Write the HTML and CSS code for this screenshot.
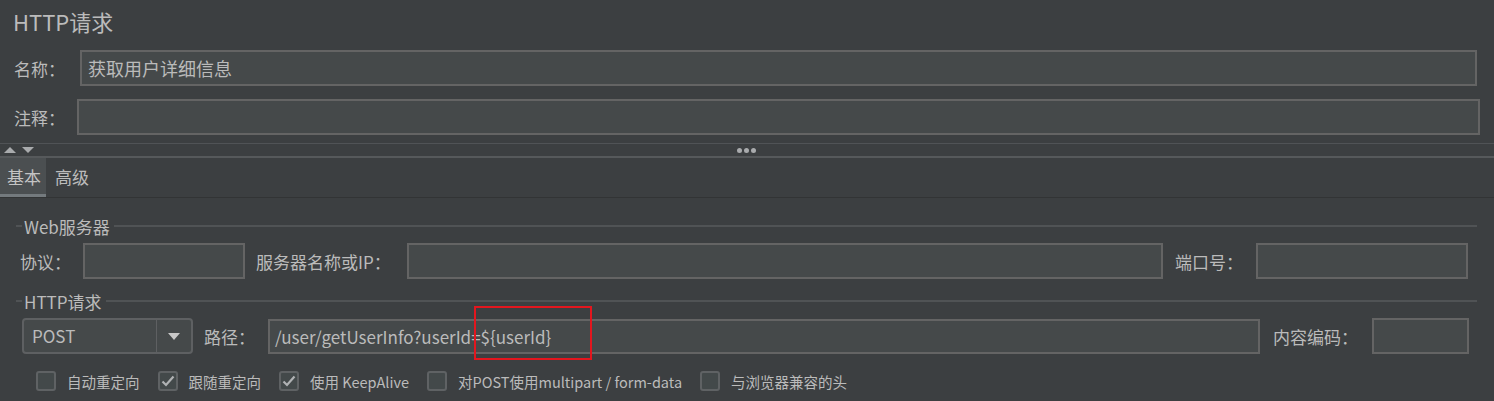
FILE: index.html
```html
<!DOCTYPE html>
<html lang="zh-CN">
<head>
<meta charset="utf-8">
<title>HTTP请求</title>
<link rel="stylesheet" href="styles.css">
</head>
<body>
<div class="page">
  <div class="title">HTTP请求</div>

  <div class="row row-name">
    <span class="lbl lbl-name">名称：</span>
    <div class="input">获取用户详细信息</div>
  </div>
  <div class="row row-comment">
    <span class="lbl lbl-comment">注释：</span>
    <div class="input"></div>
  </div>

  <div class="splitter">
    <div class="arrows">
      <svg width="12" height="8" viewBox="0 0 12 8"><polygon points="0,7 6,1 12,7" fill="#a9abad"/></svg>
      <svg width="12" height="8" viewBox="0 0 12 8"><polygon points="0,1 12,1 6,7" fill="#a9abad"/></svg>
    </div>
    <div class="dots"><span></span><span></span><span></span></div>
  </div>

  <div class="tabs">
    <div class="tab tab-active">基本</div>
    <div class="tab">高级</div>
  </div>

  <div class="panel">
    <div class="group-title"><span class="gl-left"></span><span class="gl-text">Web服务器</span><span class="gl-line"></span></div>
    <div class="frow frow-server">
      <span class="lbl w-proto">协议：</span>
      <div class="input in-proto"></div>
      <span class="lbl w-host">服务器名称或IP：</span>
      <div class="input in-flex"></div>
      <span class="lbl w-port">端口号：</span>
      <div class="input in-port"></div>
    </div>

    <div class="group-title"><span class="gl-left"></span><span class="gl-text">HTTP请求</span><span class="gl-line"></span></div>
    <div class="frow frow-http">
      <div class="combo">
        <span class="combo-text">POST</span>
        <span class="combo-btn"><svg width="12" height="7" viewBox="0 0 12 7"><polygon points="0,0 12,0 6,7" fill="#c8c8c8"/></svg></span>
      </div>
      <span class="lbl w-path">路径：</span>
      <div class="input in-flex in-path">/user/getUserInfo?userId=${userId}<span class="highlight"></span></div>
      <span class="lbl w-enc">内容编码：</span>
      <div class="input in-enc"></div>
    </div>

    <div class="checks">
      <label class="check"><span class="box"></span><span>自动重定向</span></label>
      <label class="check"><span class="box box-on"><svg width="14" height="12" viewBox="0 0 14 12"><path d="M1.5 6.5 L5 10 L12.5 1.5" fill="none" stroke="#b0b2b4" stroke-width="2.2"/></svg></span><span>跟随重定向</span></label>
      <label class="check"><span class="box box-on"><svg width="14" height="12" viewBox="0 0 14 12"><path d="M1.5 6.5 L5 10 L12.5 1.5" fill="none" stroke="#b0b2b4" stroke-width="2.2"/></svg></span><span>使用 KeepAlive</span></label>
      <label class="check"><span class="box"></span><span>对POST使用multipart / form-data</span></label>
      <label class="check"><span class="box"></span><span>与浏览器兼容的头</span></label>
    </div>
  </div>
</div>
</body>
</html>
```
FILE: styles.css
```css
* { box-sizing: border-box; }
html, body {
  margin: 0;
  padding: 0;
  background: #3c3f41;
}
body {
  width: 1494px;
  height: 401px;
  overflow: hidden;
  font-family: "Noto Sans CJK SC", "Noto Sans", sans-serif;
  color: #bbbbbb;
}
.page { display: flex; flex-direction: column; }

.title {
  height: 46px;
  line-height: 42px;
  padding-left: 13px;
  font-size: 22px;
  color: #bbbbbb;
}

.row {
  display: flex;
  align-items: center;
  height: 36px;
  padding-left: 14px;
}
.row-name { margin-top: 4px; padding-right: 17px; }
.row-comment { margin-top: 13px; padding-right: 14px; }
.lbl {
  font-size: 17px;
  white-space: nowrap;
  flex: none;
}
.lbl-name { width: 66px; }
.lbl-comment { width: 63px; }

.input {
  height: 36px;
  background: #45494a;
  border: 2px solid #646464;
  font-size: 18px;
  line-height: 32px;
  padding-left: 6px;
  color: #bbbbbb;
  white-space: nowrap;
  flex: 1;
  position: relative;
}

.splitter {
  margin-top: 8px;
  height: 15px;
  border-top: 1px solid #505356;
  border-bottom: 2px solid #56595b;
  position: relative;
  display: flex;
  align-items: center;
}
.arrows {
  display: flex;
  gap: 6px;
  padding-left: 4px;
  margin-top: -1px;
}
.dots {
  position: absolute;
  left: 737px;
  top: 4px;
  display: flex;
  gap: 2px;
}
.dots span {
  width: 5px;
  height: 5px;
  border-radius: 50%;
  background: #a9abad;
}

.tabs {
  display: flex;
  height: 40px;
  border-bottom: 1px solid #323435;
}
.tab {
  font-size: 17px;
  line-height: 38px;
  padding: 0 5px 0 9px;
}
.tab-active {
  background: #4b4f51;
  padding: 0 5px 0 7px;
  border-bottom: 3px solid #747a7e;
  color: #c4c4c4;
}

.panel {
  display: flex;
  flex-direction: column;
}
.group-title {
  display: flex;
  align-items: center;
  height: 20px;
  padding-left: 16px;
  padding-right: 17px;
}
.panel > .group-title:first-child { margin-top: 18px; }
.gl-left {
  width: 6px;
  height: 2px;
  background: #505355;
}
.gl-text {
  font-size: 17px;
  padding: 0 4px 0 2px;
  white-space: nowrap;
}
.gl-line {
  flex: 1;
  height: 2px;
  background: #505355;
}

.frow {
  display: flex;
  align-items: center;
  height: 36px;
}
.frow-server {
  margin-top: 7px;
  padding-left: 20px;
  padding-right: 26px;
  margin-bottom: 12px;
}
.frow-http {
  margin-top: 7px;
  padding-left: 22px;
  padding-right: 25px;
}
.w-proto { width: 63px; }
.w-host { width: 151px; margin-left: 11px; }
.w-port { width: 81px; margin-left: 12px; }
.w-path { width: 64px; margin-left: 11px; }
.w-enc { width: 99px; margin-left: 13px; }
.in-proto { flex: none; width: 162px; }
.in-port { flex: none; width: 212px; }
.in-enc { flex: none; width: 97px; }
.in-path { height: 35px; padding-left: 5px; line-height: 31px; font-size: 17px; }

.highlight {
  position: absolute;
  left: 204px;
  top: -15px;
  width: 118px;
  height: 54px;
  border: 2px solid #e3161e;
}

.combo {
  flex: none;
  width: 171px;
  height: 36px;
  display: flex;
  border: 2px solid #5e6062;
  border-radius: 4px;
  background: #45494a;
}
.combo-text {
  flex: 1;
  font-size: 17px;
  line-height: 32px;
  padding-left: 8px;
  color: #bbbbbb;
}
.combo-btn {
  width: 35px;
  border-left: 1px solid #5e6062;
  display: flex;
  align-items: center;
  justify-content: center;
}

.checks {
  display: flex;
  align-items: center;
  gap: 18px;
  margin-top: 17px;
  padding-left: 36px;
  height: 20px;
}
.check {
  display: flex;
  align-items: center;
  gap: 11px;
  font-size: 14.5px;
  white-space: nowrap;
}
.box {
  width: 20px;
  height: 20px;
  border: 2px solid #5f6264;
  border-radius: 3px;
  background: #43494a;
  display: flex;
  align-items: center;
  justify-content: center;
}
```
